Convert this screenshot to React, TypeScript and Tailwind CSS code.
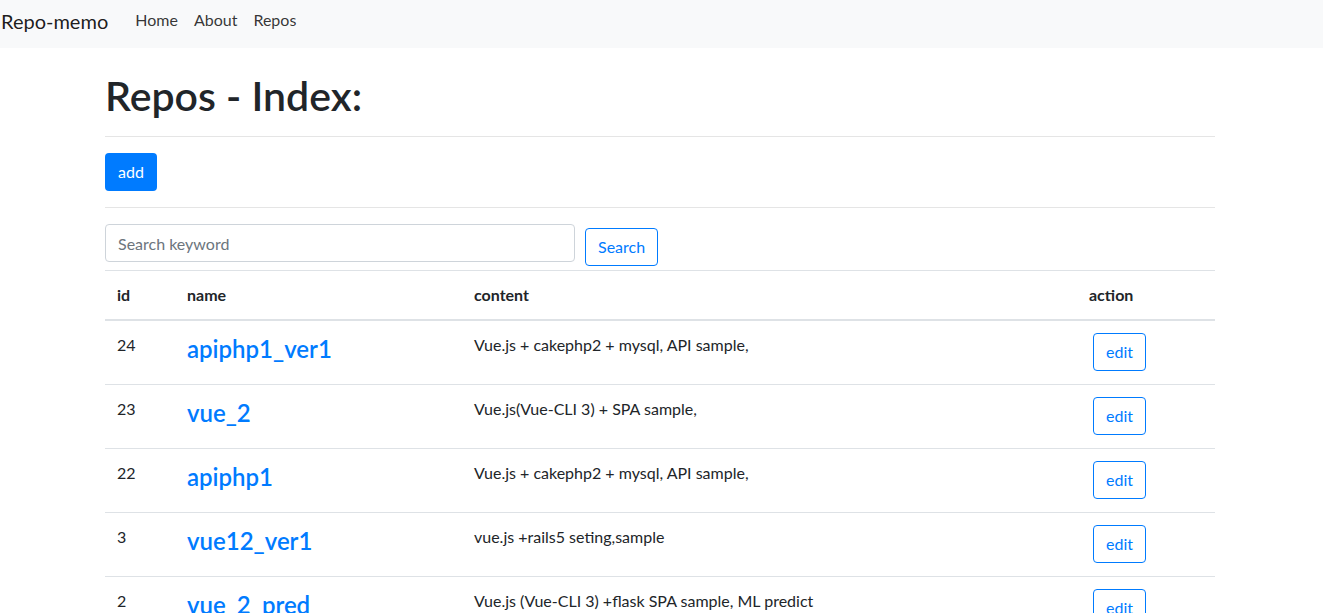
import React from 'react';

// ── Data ───────────────────────────────────────────────────────────────────
const repos = [
  { id: 24, name: 'apiphp1_ver1', content: 'Vue.js + cakephp2 + mysql, API sample,' },
  { id: 23, name: 'vue_2', content: 'Vue.js(Vue-CLI 3) + SPA sample,' },
  { id: 22, name: 'apiphp1', content: 'Vue.js + cakephp2 + mysql, API sample,' },
  { id: 3, name: 'vue12_ver1', content: 'vue.js +rails5 seting,sample' },
  { id: 2, name: 'vue_2_pred', content: 'Vue.js (Vue-CLI 3) +flask SPA sample, ML predict' },
];

// ── Navbar ─────────────────────────────────────────────────────────────────
const Navbar: React.FC = () => (
  <nav className="h-12 bg-[#f8f9fa] flex items-start">
    <a className="mt-[6px] text-[20px] leading-[30px] text-[rgba(0,0,0,0.9)] pl-[1px] mr-[19px]">Repo-memo</a>
    <a className="mt-2 px-2 text-[16px] leading-6 text-[rgba(0,0,0,0.8)]">Home</a>
    <a className="mt-2 px-2 text-[16px] leading-6 text-[rgba(0,0,0,0.8)]">About</a>
    <a className="mt-2 px-2 text-[16px] leading-6 text-[rgba(0,0,0,0.8)]">Repos</a>
  </nav>
);

// ── App ────────────────────────────────────────────────────────────────────
export default function App() {
  return (
    <div className="font-['Lato','Noto_Sans',sans-serif] text-[#212529] text-[16px] leading-6 bg-white min-h-screen">
      <Navbar />
      <div className="w-[1110px] ml-[105px]">
        <h1 className="mt-6 text-[41px] leading-[48px] font-semibold">Repos - Index:</h1>
        <hr className="mt-4 border-t border-[rgba(0,0,0,0.1)]" />
        <button className="mt-4 h-[38px] px-[13px] bg-[#007bff] text-white rounded">add</button>
        <hr className="mt-4 border-t border-[rgba(0,0,0,0.1)]" />
        <div className="mt-4 flex items-start gap-[10px]">
          <input
            className="w-[470px] h-[38px] px-3 border border-[#ced4da] rounded placeholder:text-[#6c757d] outline-none"
            placeholder="Search keyword"
          />
          <button className="mt-1 h-[38px] px-3 border border-[#007bff] text-[#007bff] rounded">Search</button>
        </div>
        <table className="mt-1 w-full border-collapse text-left">
          <thead>
            <tr>
              <th className="w-[70px] p-3 font-bold border-t border-b-2 border-[#dee2e6]">id</th>
              <th className="w-[287px] p-3 font-bold border-t border-b-2 border-[#dee2e6]">name</th>
              <th className="p-3 font-bold border-t border-b-2 border-[#dee2e6]">content</th>
              <th className="w-[138px] p-3 font-bold border-t border-b-2 border-[#dee2e6]">action</th>
            </tr>
          </thead>
          <tbody>
            {repos.map((r) => (
              <tr key={r.id} className="h-16 border-b border-[#dee2e6]">
                <td className="p-3 align-top">{r.id}</td>
                <td className="p-3 align-top">
                  <a className="block mt-[1px] text-[24px] leading-[29px] font-semibold text-[#007bff]">{r.name}</a>
                </td>
                <td className="p-3 align-top">{r.content}</td>
                <td className="p-3 align-top">
                  <button className="ml-1 h-[38px] px-3 border border-[#007bff] text-[#007bff] rounded">edit</button>
                </td>
              </tr>
            ))}
          </tbody>
        </table>
      </div>
    </div>
  );
}
